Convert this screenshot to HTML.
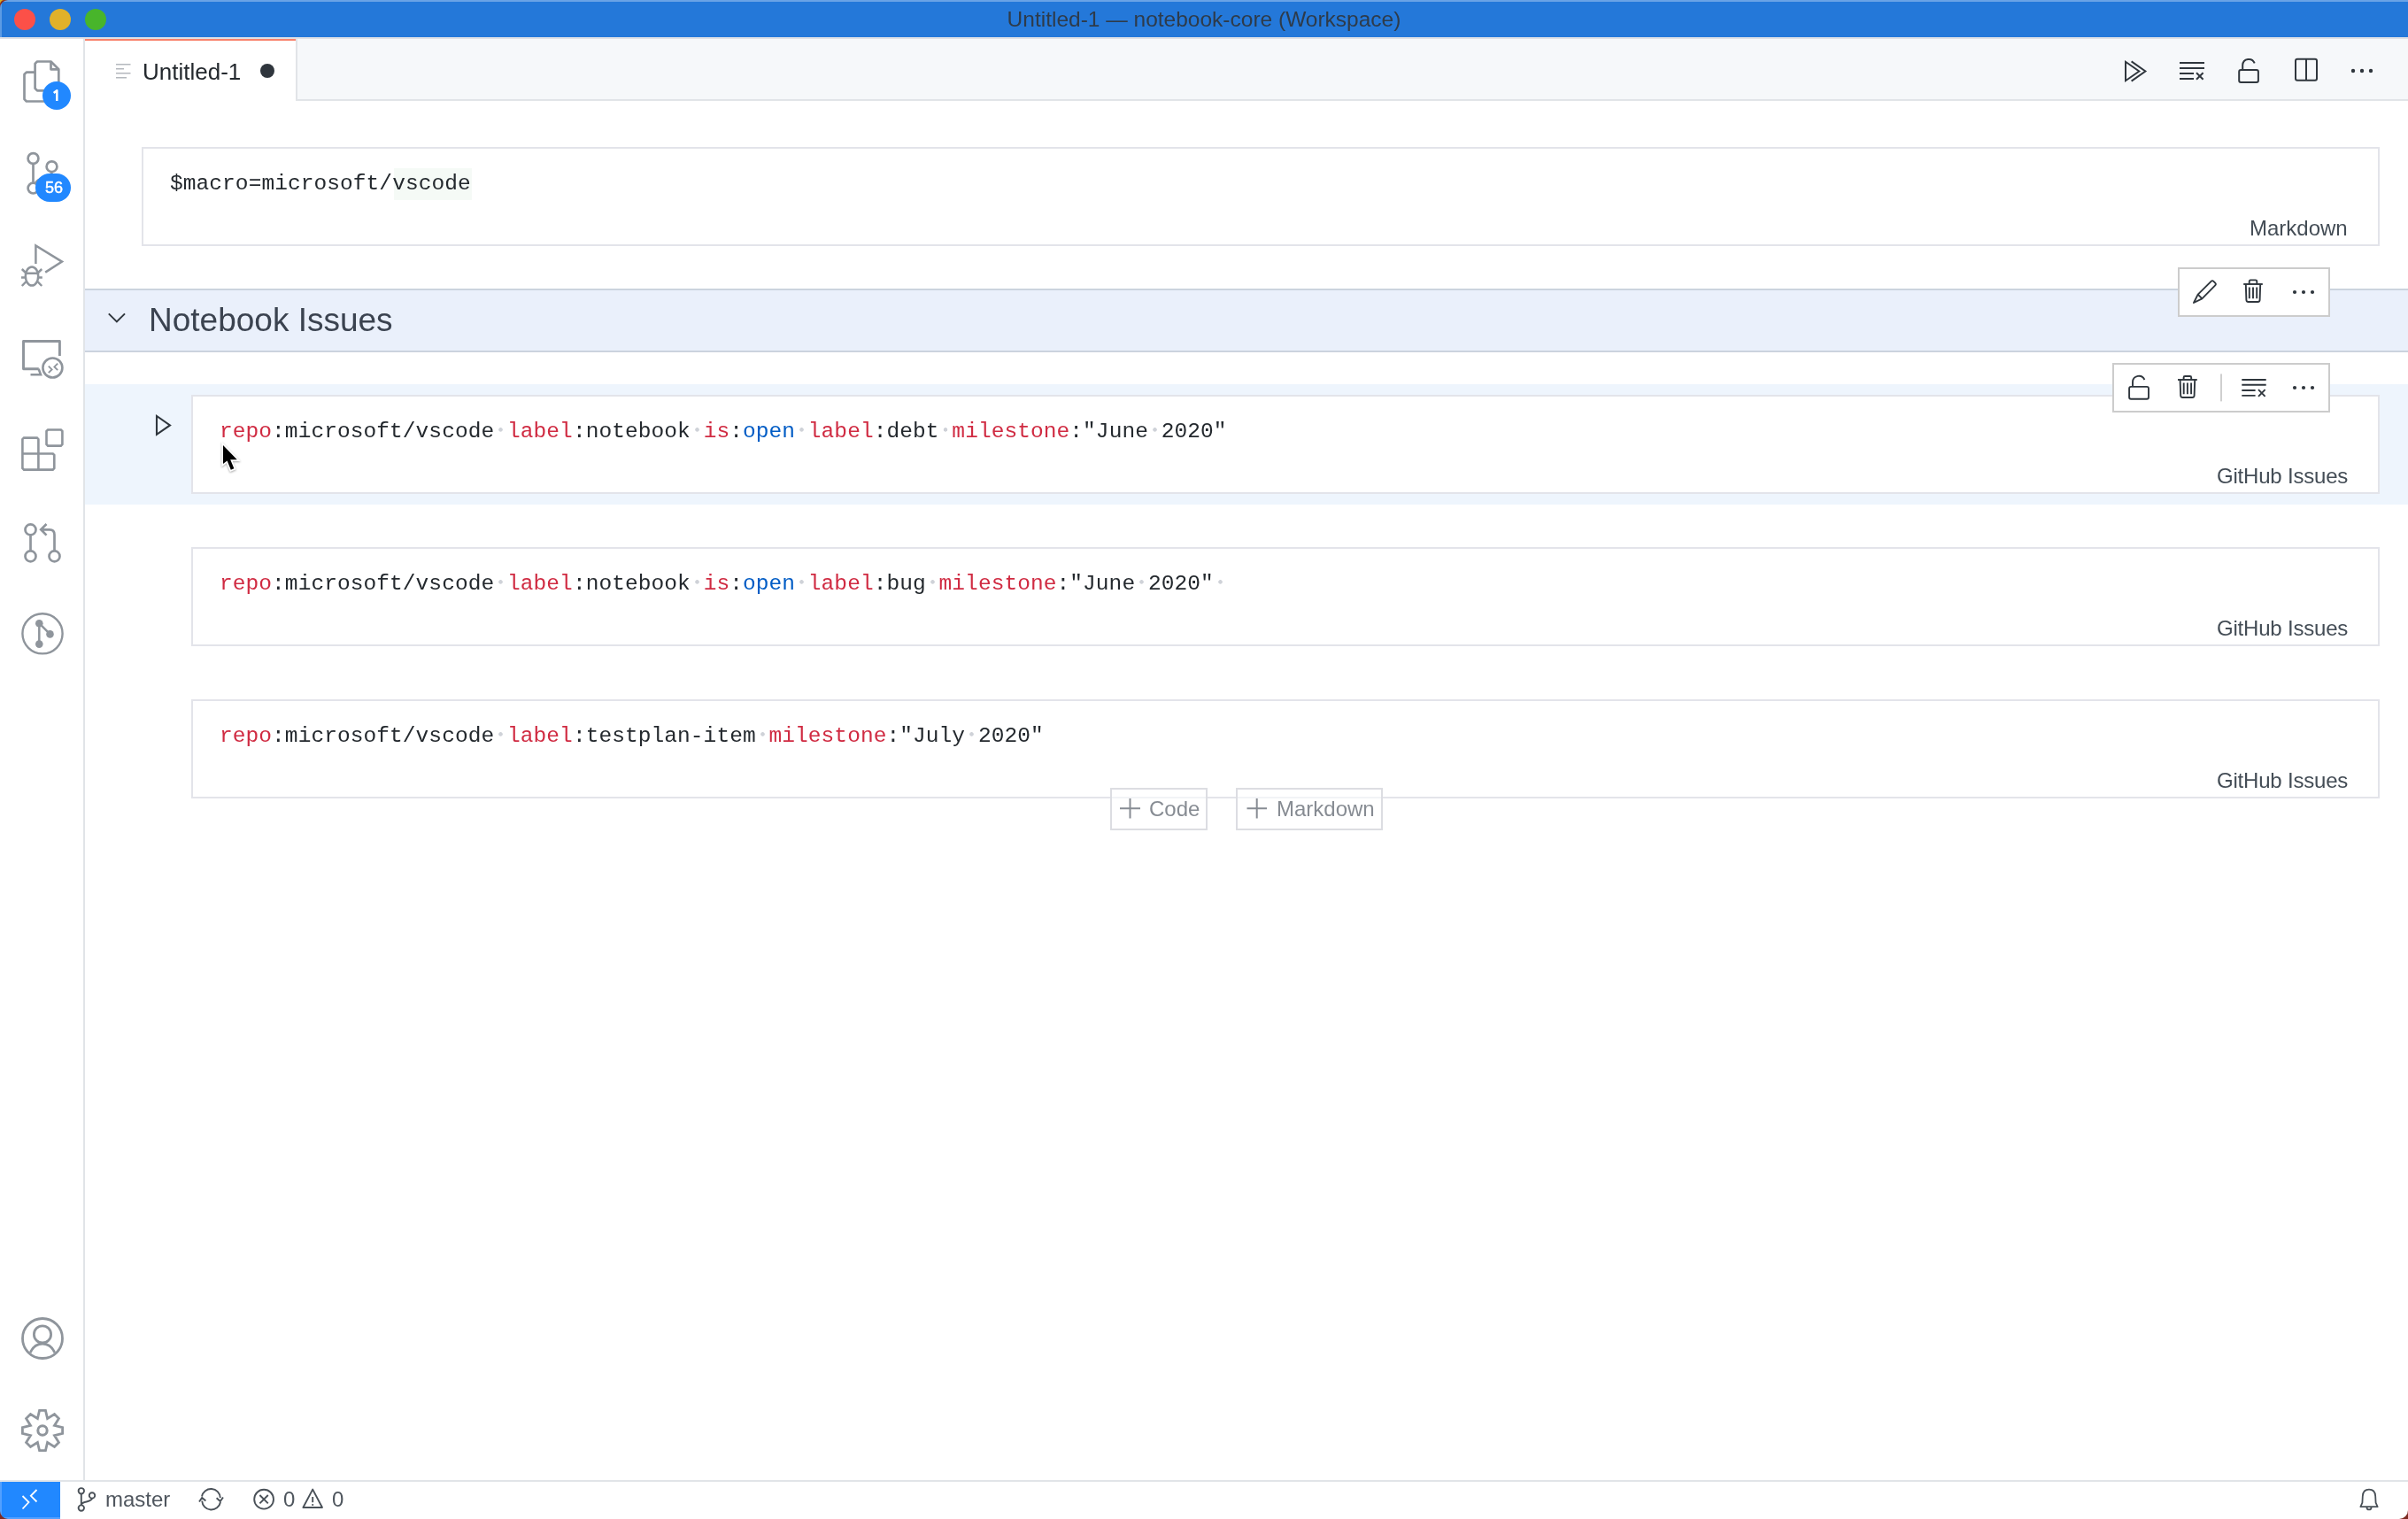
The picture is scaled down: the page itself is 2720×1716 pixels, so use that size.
<!DOCTYPE html>
<html><head><meta charset="utf-8"><title>Untitled-1</title>
<style>
html,body{margin:0;padding:0;width:2720px;height:1716px;overflow:hidden;background:#fff;}
body{position:relative;font-family:"Liberation Sans",sans-serif;}
.r{position:absolute;box-sizing:content-box;}
.t{position:absolute;white-space:pre;will-change:transform;}
svg{position:absolute;left:0;top:0;}
.ws{background:radial-gradient(circle at 50% 11.4px,#cfd2d8 0,#cfd2d8 1.9px,rgba(207,210,216,0) 2.6px);}
</style></head><body>
<div class="r" style="left:0px;top:0px;width:2720px;height:42px;background:#2478d9;"></div>
<div class="r" style="left:0px;top:0px;width:2720px;height:2px;background:#6aa3e6;"></div>
<div class="r" style="left:0px;top:42px;width:2720px;height:2px;background:#dfe1e6;"></div>
<div class="t" style="left:360px;width:2000px;text-align:center;top:3.01px;font:normal 24.5px/37px 'Liberation Sans', sans-serif;color:#2e3b4a;">Untitled-1 — notebook-core (Workspace)</div>
<div class="r" style="left:96px;top:44px;width:2624px;height:68px;background:#f6f8fa;"></div>
<div class="r" style="left:96px;top:112px;width:2624px;height:2px;background:#e1e4e8;"></div>
<div class="r" style="left:96px;top:44px;width:238px;height:70px;background:#ffffff;"></div>
<div class="r" style="left:96px;top:44px;width:238px;height:2px;background:#f9826c;"></div>
<div class="r" style="left:334px;top:44px;width:2px;height:68px;background:#e1e4e8;"></div>
<div class="t" style="left:161px;top:62.49px;font:normal 26px/39px 'Liberation Sans', sans-serif;color:#24292e;">Untitled-1</div>
<div class="r" style="left:0px;top:44px;width:94px;height:1628px;background:#ffffff;"></div>
<div class="r" style="left:94px;top:44px;width:2px;height:1628px;background:#e1e4e8;"></div>
<div class="r" style="left:0px;top:1672px;width:2720px;height:2px;background:#e1e4e8;"></div>
<div class="r" style="left:0px;top:1674px;width:2720px;height:42px;background:#ffffff;"></div>
<div class="r" style="left:0px;top:1674px;width:68px;height:42px;background:#2188ff;"></div>
<div class="t" style="left:119px;top:1675.68px;font:normal 24px/36px 'Liberation Sans', sans-serif;color:#4f565e;">master</div>
<div class="t" style="left:319.5px;top:1675.68px;font:normal 24px/36px 'Liberation Sans', sans-serif;color:#4f565e;">0</div>
<div class="t" style="left:374.5px;top:1675.68px;font:normal 24px/36px 'Liberation Sans', sans-serif;color:#4f565e;">0</div>
<div class="r" style="left:160px;top:166px;width:2524px;height:108px;border:2px solid #e3e4ea;background:transparent;"></div>
<div class="r" style="left:445px;top:190px;width:88px;height:36px;background:#f5faf6;"></div>
<div class="t" style="left:192px;top:188.98px;font:normal 24.5px/37px 'Liberation Mono', monospace;color:#24292e;letter-spacing:0.07px;">$macro=microsoft/vscode</div>
<div class="t" style="right:68px;text-align:right;top:239.68px;font:normal 24px/36px 'Liberation Sans', sans-serif;color:#444d56;">Markdown</div>
<div class="r" style="left:96px;top:326px;width:2624px;height:72px;background:#eaf0fb;"></div>
<div class="r" style="left:96px;top:326px;width:2624px;height:2px;background:#cbd3de;"></div>
<div class="r" style="left:96px;top:396px;width:2624px;height:2px;background:#cbd3de;"></div>
<div class="t" style="left:168px;top:334.17px;font:normal 37px/56px 'Liberation Sans', sans-serif;color:#3b4350;">Notebook Issues</div>
<div class="r" style="left:96px;top:434px;width:2624px;height:136px;background:#eef5fd;"></div>
<div class="r" style="left:216px;top:446px;width:2468px;height:108px;border:2px solid #e3e4ea;background:#ffffff;"></div>
<div class="t" style="left:248px;top:468.98px;font:normal 24.5px/37px 'Liberation Mono', monospace;color:#24292e;letter-spacing:0.07px;"><span style="color:#d02b42">repo</span>:microsoft/vscode<span class="ws"> </span><span style="color:#d02b42">label</span>:notebook<span class="ws"> </span><span style="color:#d02b42">is</span>:<span style="color:#005cc5">open</span><span class="ws"> </span><span style="color:#d02b42">label</span>:debt<span class="ws"> </span><span style="color:#d02b42">milestone</span>:"June<span class="ws"> </span>2020"</div>
<div class="t" style="right:68px;text-align:right;top:519.68px;font:normal 24px/36px 'Liberation Sans', sans-serif;color:#444d56;letter-spacing:-0.2px;">GitHub Issues</div>
<div class="r" style="left:216px;top:618px;width:2468px;height:108px;border:2px solid #e3e4ea;background:#ffffff;"></div>
<div class="t" style="left:248px;top:640.98px;font:normal 24.5px/37px 'Liberation Mono', monospace;color:#24292e;letter-spacing:0.07px;"><span style="color:#d02b42">repo</span>:microsoft/vscode<span class="ws"> </span><span style="color:#d02b42">label</span>:notebook<span class="ws"> </span><span style="color:#d02b42">is</span>:<span style="color:#005cc5">open</span><span class="ws"> </span><span style="color:#d02b42">label</span>:bug<span class="ws"> </span><span style="color:#d02b42">milestone</span>:"June<span class="ws"> </span>2020"<span class="ws"> </span></div>
<div class="t" style="right:68px;text-align:right;top:691.68px;font:normal 24px/36px 'Liberation Sans', sans-serif;color:#444d56;letter-spacing:-0.2px;">GitHub Issues</div>
<div class="r" style="left:216px;top:790px;width:2468px;height:108px;border:2px solid #e3e4ea;background:#ffffff;"></div>
<div class="t" style="left:248px;top:812.98px;font:normal 24.5px/37px 'Liberation Mono', monospace;color:#24292e;letter-spacing:0.07px;"><span style="color:#d02b42">repo</span>:microsoft/vscode<span class="ws"> </span><span style="color:#d02b42">label</span>:testplan-item<span class="ws"> </span><span style="color:#d02b42">milestone</span>:"July<span class="ws"> </span>2020"</div>
<div class="t" style="right:68px;text-align:right;top:863.68px;font:normal 24px/36px 'Liberation Sans', sans-serif;color:#444d56;letter-spacing:-0.2px;">GitHub Issues</div>
<div class="r" style="left:2460px;top:302px;width:168px;height:52px;border:2px solid #cccccc;background:#ffffff;"></div>
<div class="r" style="left:2386px;top:410px;width:242px;height:52px;border:2px solid #cccccc;background:#ffffff;"></div>
<div class="r" style="left:1254px;top:890px;width:106px;height:44px;border:2px solid #dcdde2;background:rgba(255,255,255,0.55);"></div>
<div class="r" style="left:1396px;top:890px;width:162px;height:44px;border:2px solid #dcdde2;background:rgba(255,255,255,0.55);"></div>
<div class="t" style="left:1297.5px;top:895.68px;font:normal 24px/36px 'Liberation Sans', sans-serif;color:#878c93;">Code</div>
<div class="t" style="left:1442px;top:895.68px;font:normal 24px/36px 'Liberation Sans', sans-serif;color:#878c93;">Markdown</div>
<svg width="2720" height="1716" viewBox="0 0 2720 1716" style="position:absolute;left:0;top:0">
<circle cx="28" cy="22" r="12" fill="#fc5048"/>
<circle cx="68" cy="22" r="12" fill="#e0b12a"/>
<circle cx="108" cy="22" r="12" fill="#48b52b"/>
<g fill="none" stroke="#8f959c" stroke-width="2.7" stroke-linejoin="round">
<path d="M52 102.3 H42 L39.6 99.9 V71.9 L42 69.5 H57.5 L66.3 78.3 V100"/>
<path d="M57.5 69.5 V78.3 H66.3"/>
<path d="M39.6 81.6 H29.9 L27.5 84 V112.1 L29.9 114.5 H52"/>
<circle cx="37.5" cy="179" r="5.9"/>
<circle cx="58.5" cy="188.2" r="5.9"/>
<circle cx="37.5" cy="212.6" r="5.9"/>
<path d="M37.5 185 V206.7"/>
<path d="M58.5 194 C58.5 202 44 199 40 207"/>
<path d="M40.4 298 V277.5 L70 295.6 L51.2 307.6" stroke-linejoin="miter" stroke-width="2.5"/>
<ellipse cx="36" cy="312" rx="7.2" ry="10.6" stroke-width="2.5"/>
<path d="M29 308.8 H43 M24 313.6 H28.8 M43.2 313.6 H47.8 M24.8 304 L30 309 M47.2 304 L42 309 M24.8 323 L29.6 318 M47.2 323 L42.4 318" stroke-width="2.5"/>
<path d="M43.8 416.8 H26.5 V385.5 H67.4 V402" stroke-linejoin="round" stroke-width="2.9"/>
<path d="M43.6 416.8 L46 423.3 H34.5" stroke-width="2.6" stroke-linejoin="miter" stroke-linecap="butt"/>
<circle cx="59.4" cy="415.5" r="11" stroke-width="2.6"/>
<path d="M54.8 413.6 L58.6 417.4 L54.8 421.2 M65.2 410.6 L61.4 414.4 L65.2 418.2" stroke-width="1.9" stroke-linejoin="miter"/>
<path d="M27 494.6 H41.8 L43.4 496.2 V512.5 H59.7 L61.3 514.1 V529 L59.7 530.6 H27 L25.4 529 V496.2 Z M25.4 512.5 H43.4 V530.6" stroke-width="2.6" stroke-linejoin="miter"/>
<path d="M54.1 485.5 H68.8 L70.4 487.1 V502 L68.8 503.6 H54.1 L52.5 502 V487.1 Z" stroke-width="2.6" stroke-linejoin="miter"/>
<circle cx="34.5" cy="598.4" r="6"/>
<circle cx="34.5" cy="628.4" r="6"/>
<circle cx="61.5" cy="628.4" r="6"/>
<path d="M34.5 604.4 V622.4 M61.5 622.4 V604 Q61.5 598.3 56 598.3 H46 M52.5 592 L46.2 598.3 L52.5 604.6" stroke-linejoin="miter"/>
<circle cx="48" cy="715.8" r="22.6" stroke-width="2.4"/>
<path d="M44.3 704.2 V727.6 M44.3 704.2 L56.5 716.4" stroke-width="2.5"/>
</g>
<g fill="#8f959c"><circle cx="44.3" cy="704.2" r="4.3"/><circle cx="56.5" cy="716.4" r="4.3"/><circle cx="44.3" cy="727.6" r="4.3"/></g>
<g fill="none" stroke="#8f959c" stroke-width="2.8">
<circle cx="48" cy="1512" r="22.5"/>
<circle cx="48" cy="1507.4" r="9.6"/>
<path d="M34.3 1528 C37 1521.5 42 1518.1 48 1518.1 C54 1518.1 59 1521.5 61.7 1528"/>
</g>
<path d="M44.55 1593.40 L51.45 1593.40 L53.59 1602.51 L61.54 1597.58 L66.42 1602.46 L61.49 1610.41 L70.60 1612.55 L70.60 1619.45 L61.49 1621.59 L66.42 1629.54 L61.54 1634.42 L53.59 1629.49 L51.45 1638.60 L44.55 1638.60 L42.41 1629.49 L34.46 1634.42 L29.58 1629.54 L34.51 1621.59 L25.40 1619.45 L25.40 1612.55 L34.51 1610.41 L29.58 1602.46 L34.46 1597.58 L42.41 1602.51 Z" fill="none" stroke="#8f959c" stroke-width="2.8" stroke-linejoin="miter"/>
<circle cx="48" cy="1616" r="5.2" fill="none" stroke="#8f959c" stroke-width="3"/>
<circle cx="64" cy="108" r="16" fill="#2188ff"/>
<path d="M64.3 113.9 V102.2 L60.7 104.9" fill="none" stroke="#fff" stroke-width="2.5" stroke-linejoin="round"/>
<rect x="40" y="196" width="40" height="32" rx="16" fill="#2188ff"/>
<g stroke="#b4b8bd" stroke-width="1.6">
<path d="M131 72.8 H147.5 M131 77.8 H140 M131 82.8 H147.5 M131 87.8 H143"/>
</g>
<circle cx="302" cy="80" r="8" fill="#2f363d"/>
<g fill="none" stroke="#2f363d" stroke-width="2">
<path d="M2401 69.8 V91.2 L2416.3 80.5 Z" stroke-linejoin="miter"/>
<path d="M2407.6 69.4 L2423.4 80.5 L2407.6 91.6" stroke-linejoin="miter"/>
<path d="M2462 71 H2490 M2462 77 H2490 M2462 83 H2478 M2462 89 H2478 M2481 82.2 L2488.6 89.8 M2488.6 82.2 L2481 89.8"/>
<rect x="2529.2" y="79.1" width="21.7" height="13.8" rx="2"/>
<path d="M2533.2 79 V73.5 A7 7 0 0 1 2546.7 71.4"/>
<rect x="2593" y="66.8" width="24" height="24" rx="2"/>
<path d="M2605 66.8 V90.8"/>
</g>
<g fill="#2f363d"><circle cx="2658" cy="80" r="2.2"/><circle cx="2668" cy="80" r="2.2"/><circle cx="2678" cy="80" r="2.2"/></g>
<path d="M122.8 354.4 L131.9 363.4 L141 354.4" fill="none" stroke="#2f363d" stroke-width="2"/>
<g fill="none" stroke="#2f363d" stroke-width="1.9">
<path d="M2478 342 L2482.7 332.6 L2497.6 317.8 Q2499 316.4 2500.4 317.8 L2502.2 319.6 Q2503.6 321 2502.2 322.4 L2487.4 337.3 Z M2482.7 332.6 L2487.4 337.3" stroke-linejoin="round"/>
<path d="M2534.2 321 H2555.8"/><path d="M2540.7 321 V317.9 Q2540.7 316.4 2542.2 316.4 H2547.8 Q2549.3 316.4 2549.3 317.9 V321"/><path d="M2536.7999999999997 321 L2537.3999999999996 339 Q2537.6 341 2539.6 341 H2550.4 Q2552.4 341 2552.6000000000004 339 L2553.2000000000003 321"/><path d="M2540.8 324.5 V337.2 M2545.0 324.5 V337.2 M2549.2 324.5 V337.2"/>
</g>
<g fill="#2f363d"><circle cx="2592" cy="330" r="2.1"/><circle cx="2602" cy="330" r="2.1"/><circle cx="2612" cy="330" r="2.1"/></g>
<g fill="none" stroke="#2f363d" stroke-width="1.9">
<rect x="2405.1" y="436.9" width="21.9" height="13.8" rx="2"/>
<path d="M2409 436.8 V431.5 A7 7 0 0 1 2422.4 429"/>
<path d="M2460 429 H2481.8"/><path d="M2466.6 429 V426.5 Q2466.6 425 2468.1 425 H2473.7000000000003 Q2475.2000000000003 425 2475.2000000000003 426.5 V429"/><path d="M2462.6 429 L2463.2 447 Q2463.4 449 2465.4 449 H2476.4 Q2478.4 449 2478.6000000000004 447 L2479.2000000000003 429"/><path d="M2466.7000000000003 432.5 V445.2 M2470.9 432.5 V445.2 M2475.1 432.5 V445.2"/>
<path d="M2532.3 429 H2559.7 M2532.3 434.8 H2559.7 M2532.3 441 H2547.6 M2532.3 446.9 H2547.6 M2551 440.2 L2558.6 447.8 M2558.6 440.2 L2551 447.8"/>
</g>
<rect x="2508" y="422.4" width="2" height="31" fill="#cfcfcf"/>
<g fill="#2f363d"><circle cx="2592" cy="438" r="2.1"/><circle cx="2602" cy="438" r="2.1"/><circle cx="2612" cy="438" r="2.1"/></g>
<path d="M177 470 V490.8 L192 480.4 Z" fill="none" stroke="#2f363d" stroke-width="2.1" stroke-linejoin="miter"/>
<g stroke="#878c93" stroke-width="2">
<path d="M1265 913.3 H1288 M1276.5 902 V924.6"/>
<path d="M1408.5 913.3 H1431 M1419.7 902 V924.6"/>
</g>
<g fill="none" stroke="#ffffff" stroke-width="1.8">
<path d="M25.5 1690 L32.5 1697 L25.5 1704.5 M41.5 1683 L34.8 1689.8 L41.5 1696.5"/>
</g>
<g fill="none" stroke="#4a5158" stroke-width="1.9">
<circle cx="91.8" cy="1684.3" r="3.2"/><circle cx="104" cy="1689.4" r="3.2"/><circle cx="91.8" cy="1703.6" r="3.2"/>
<path d="M91.8 1687.5 V1700.4 M104 1692.6 C104 1697.5 92 1695.5 91.8 1700"/>
<path d="M228 1690.5 A10.5 10.5 0 0 1 248.8 1692 M249 1697 A10.5 10.5 0 0 1 228.2 1695.5"/>
<path d="M244.6 1692.3 L248.8 1696 L252 1691.5 M232.4 1695.5 L228.2 1692 L225 1696.5"/>
<circle cx="298.1" cy="1693.7" r="10.9"/>
<path d="M293.4 1689 L302.8 1698.4 M302.8 1689 L293.4 1698.4"/>
<path d="M353.2 1682.6 L364 1703 H342.4 Z" stroke-linejoin="round"/>
<path d="M353.2 1691 V1697.2" stroke-width="1.9"/>
</g>
<circle cx="353.2" cy="1700" r="1.1" fill="#4a5158"/>
<path d="M2666.4 1702.2 H2685.6 L2683.6 1697.6 L2683.2 1690.2 Q2682.8 1682.6 2676 1682.6 Q2669.2 1682.6 2668.8 1690.2 L2668.4 1697.6 Z M2673.4 1702.4 Q2673.4 1705.4 2676 1705.4 Q2678.6 1705.4 2678.6 1702.4" fill="none" stroke="#4a5158" stroke-width="1.8" stroke-linejoin="round"/>
<path d="M252 503 V524 L256.6 520.4 L260.8 530.8 L264.4 529.3 L260.2 519.2 H267.8 Z" fill="#000" stroke="#fff" stroke-width="3.4" stroke-linejoin="miter" paint-order="stroke" style="filter:drop-shadow(0.5px 1.5px 1px rgba(0,0,0,0.35))"/>
<rect x="0" y="0" width="2" height="42" fill="#5c9be4"/>
<path d="M0 0 H9 A9 9 0 0 0 0 9 Z" fill="#8e2a1c"/>
<path d="M0 0 H5 A5 5 0 0 0 0 5 Z" fill="#d9b21e"/>
<rect x="0" y="1674" width="2" height="42" fill="#52a0ff"/>
<rect x="0" y="1714" width="68" height="2" fill="#52a0ff"/>
<path d="M0 1707 V1716 H9 A9 9 0 0 1 0 1707 Z" fill="#7d2a22"/>
<path d="M2710 1716 H2720 V1706 A10 10 0 0 1 2710 1716 Z" fill="#7d2a22"/>
</svg><div class="t" style="left:-939.5px;width:2000px;text-align:center;top:199.26px;font:normal 18px/27px 'Liberation Sans', sans-serif;color:#ffffff;-webkit-text-stroke:0.5px #fff;">56</div>
</body></html>
